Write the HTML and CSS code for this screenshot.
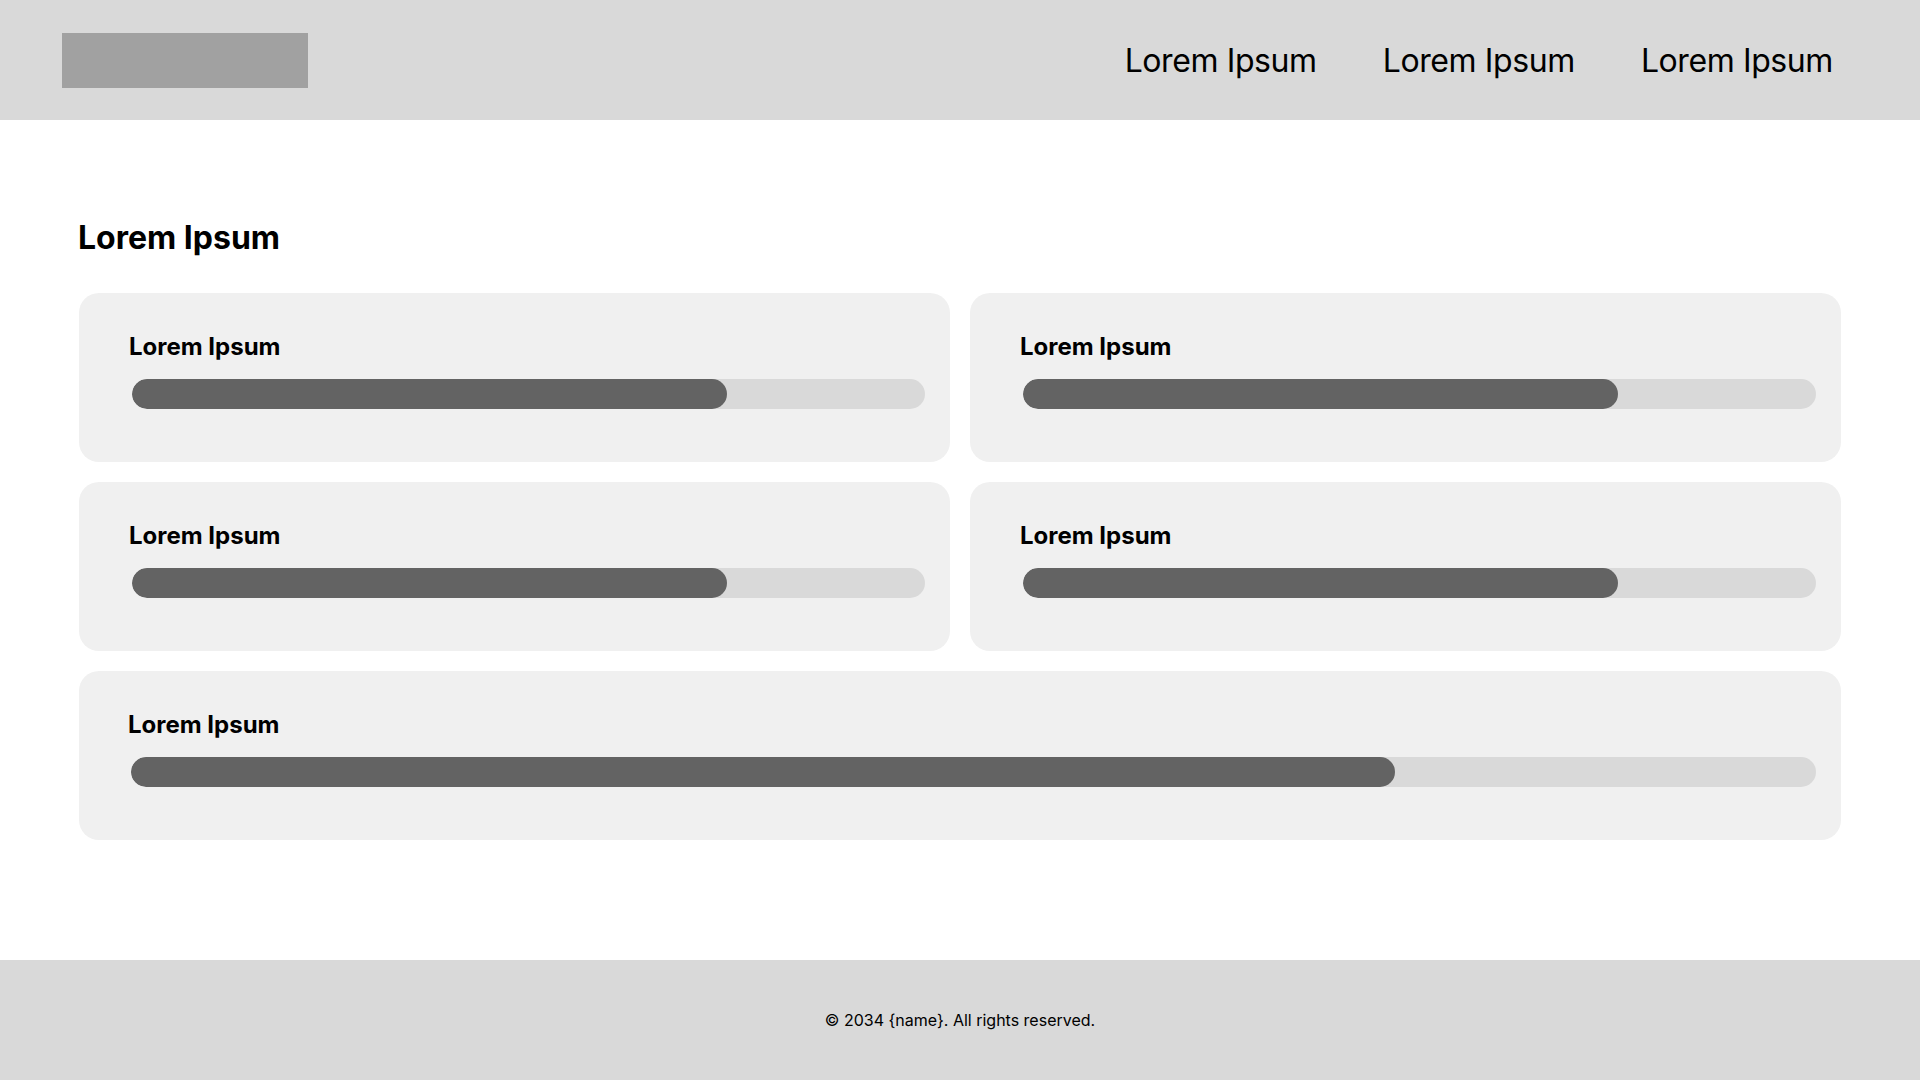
FILE: index.html
```html
<!DOCTYPE html>
<html lang="en">
<head>
<meta charset="utf-8">
<title>Progress</title>
<link rel="stylesheet" href="styles.css">
</head>
<body>
<div class="page">
  <header class="site-header">
    <div class="logo"></div>
    <nav class="nav">
      <a class="nav-link" href="#">Lorem Ipsum</a>
      <a class="nav-link" href="#">Lorem Ipsum</a>
      <a class="nav-link" href="#">Lorem Ipsum</a>
    </nav>
  </header>
  <main class="main">
    <h1 class="title">Lorem Ipsum</h1>
    <div class="grid">
      <section class="card">
        <h2 class="card-title">Lorem Ipsum</h2>
        <div class="track"><div class="fill" style="width:75%"></div></div>
      </section>
      <section class="card">
        <h2 class="card-title">Lorem Ipsum</h2>
        <div class="track"><div class="fill" style="width:75%"></div></div>
      </section>
      <section class="card">
        <h2 class="card-title">Lorem Ipsum</h2>
        <div class="track"><div class="fill" style="width:75%"></div></div>
      </section>
      <section class="card">
        <h2 class="card-title">Lorem Ipsum</h2>
        <div class="track"><div class="fill" style="width:75%"></div></div>
      </section>
      <section class="card card-wide">
        <h2 class="card-title">Lorem Ipsum</h2>
        <div class="track"><div class="fill" style="width:75%"></div></div>
      </section>
    </div>
  </main>
  <footer class="site-footer">
    <p class="copy">© 2034 {name}. All rights reserved.</p>
  </footer>
</div>
</body>
</html>
```
FILE: styles.css
```css
* { box-sizing: border-box; }
html, body { margin: 0; padding: 0; }
body {
  font-family: Inter, "Noto Sans", "Liberation Sans", sans-serif;
  color: #000;
  background: #fff;
}
.page {
  min-height: 100vh;
  display: flex;
  flex-direction: column;
}
.site-header {
  height: 120px;
  background: #d9d9d9;
  display: flex;
  align-items: center;
  justify-content: space-between;
  padding: 0 87px 0 62px;
}
.logo {
  width: 246px;
  height: 55px;
  background: #a1a1a1;
}
.nav {
  display: flex;
  gap: 66px;
  padding-top: 2px;
}
.nav-link {
  font-size: 32px;
  font-weight: 400;
  letter-spacing: -0.4px;
  color: #000;
  text-decoration: none;
  line-height: 1.21;
}
.main {
  flex: 1;
  padding: 99px 79px 120px 79px;
}
.title {
  margin: 0 0 35px -1px;
  font-size: 32px;
  font-weight: 700;
  line-height: 1.21;
}
.grid {
  display: grid;
  grid-template-columns: 1fr 1fr;
  gap: 20px;
}
.card {
  background: #f0f0f0;
  border-radius: 20px;
  height: 169px;
  padding: 39px 25px 0 50px;
}
.card-wide {
  grid-column: 1 / span 2;
  padding-left: 49px;
}
.card-title {
  margin: 0 0 18px 0;
  font-size: 24px;
  font-weight: 700;
  line-height: 29px;
}
.track {
  margin-left: 3px;
  height: 30px;
  border-radius: 15px;
  background: #d9d9d9;
  overflow: hidden;
}
.fill {
  height: 100%;
  border-radius: 15px;
  background: #636363;
}
.site-footer {
  height: 120px;
  background: #d9d9d9;
  display: flex;
  align-items: center;
  justify-content: center;
}
.copy {
  margin: 0;
  font-size: 16px;
  color: #000;
}
```
